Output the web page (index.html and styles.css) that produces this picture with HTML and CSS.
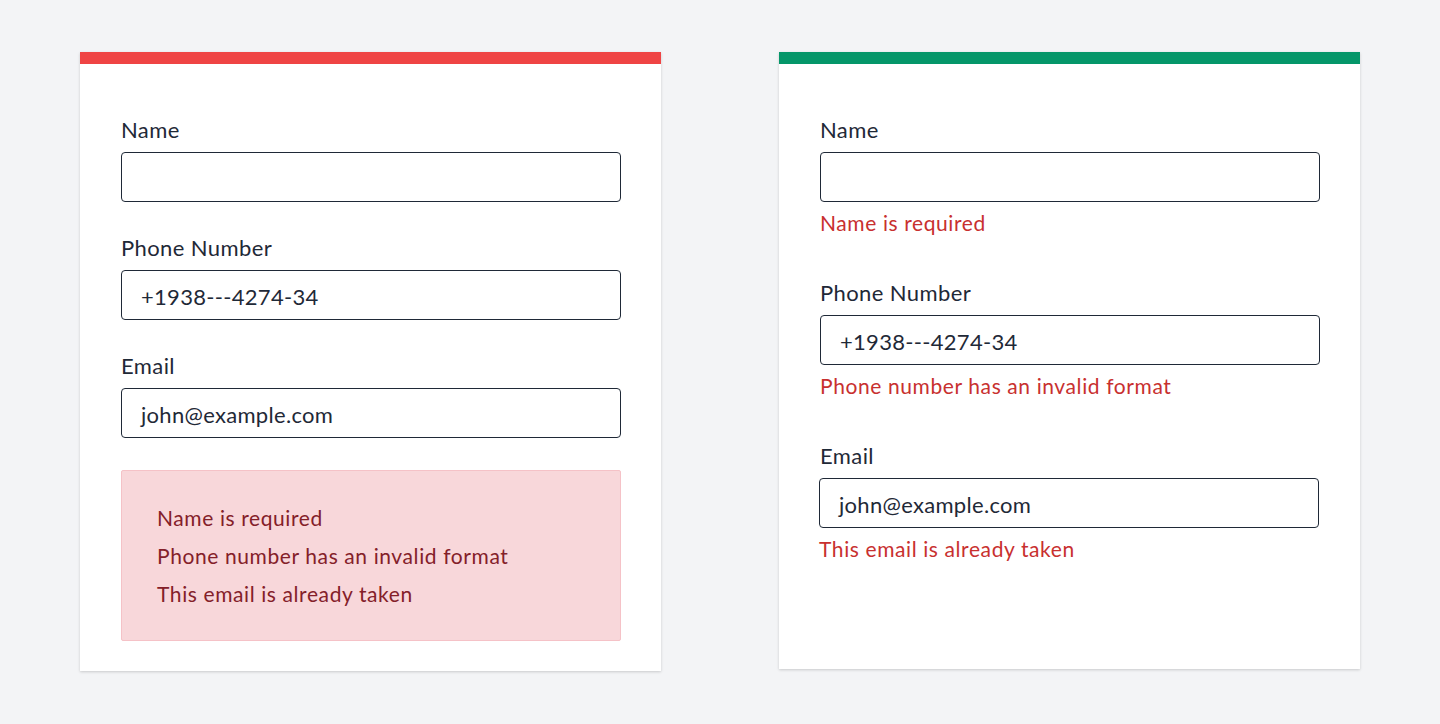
FILE: index.html
```html
<!DOCTYPE html>
<html lang="en">
<head>
<meta charset="utf-8">
<title>Form validation</title>
<link rel="stylesheet" href="styles.css">
</head>
<body>
<main class="page">
  <section class="card card-bad">
    <div class="field">
      <label class="label">Name</label>
      <div class="input"></div>
    </div>
    <div class="field">
      <label class="label">Phone Number</label>
      <div class="input">+1938---4274-34</div>
    </div>
    <div class="field">
      <label class="label">Email</label>
      <div class="input">john@example.com</div>
    </div>
    <ul class="alert">
      <li>Name is required</li>
      <li>Phone number has an invalid format</li>
      <li>This email is already taken</li>
    </ul>
  </section>
  <section class="card card-good">
    <div class="field">
      <label class="label">Name</label>
      <div class="input"></div>
      <p class="error">Name is required</p>
    </div>
    <div class="field">
      <label class="label">Phone Number</label>
      <div class="input">+1938---4274-34</div>
      <p class="error">Phone number has an invalid format</p>
    </div>
    <div class="field field-shift">
      <label class="label">Email</label>
      <div class="input">john@example.com</div>
      <p class="error">This email is already taken</p>
    </div>
  </section>
</main>
</body>
</html>
```
FILE: styles.css
```css
* { box-sizing: border-box; }
html, body { margin: 0; padding: 0; }
body {
  background: #f3f4f6;
  font-family: Lato, "Liberation Sans", sans-serif;
  color: #1f2937;
  width: 1440px;
  height: 724px;
  overflow: hidden;
}
.page {
  display: flex;
  align-items: flex-start;
  gap: 118px;
  padding: 52px 0 0 80px;
}
.card {
  width: 581px;
  background: #fff;
  border-top: 12px solid #ef4444;
  box-shadow: 0 1px 3px rgba(0, 0, 0, 0.12), 0 1px 2px rgba(0, 0, 0, 0.06);
  padding: 52px 40px 0 41px;
}
.card-bad { height: 619px; }
.card-good { height: 617px; border-top-color: #059669; }
.field { display: flex; flex-direction: column; margin-bottom: 32px; }
.label {
  font-size: 22px;
  letter-spacing: 0.4px;
  line-height: 28px;
  margin-bottom: 8px;
}
.input {
  width: 500px;
  height: 50px;
  border: 1px solid #1f2937;
  border-radius: 4px;
  padding: 0 19px;
  font-size: 22px;
  letter-spacing: 0.3px;
  line-height: 52px;
  overflow: hidden;
}
.alert {
  list-style: none;
  margin: 0;
  width: 500px;
  height: 171px;
  background: #f8d7da;
  border: 1px solid #f5c2c7;
  border-radius: 2px;
  padding: 28px 35px 0;
  color: #842029;
  font-size: 21px;
  letter-spacing: 0.6px;
  line-height: 38px;
}
.card-good .field { margin-bottom: 41px; }
.error {
  margin: 6px 0 0;
  font-size: 21px;
  letter-spacing: 0.6px;
  line-height: 30px;
  color: #c8302f;
}
.field-shift .input { margin-left: -1px; }
.field-shift .error { margin-left: -1px; }
```
